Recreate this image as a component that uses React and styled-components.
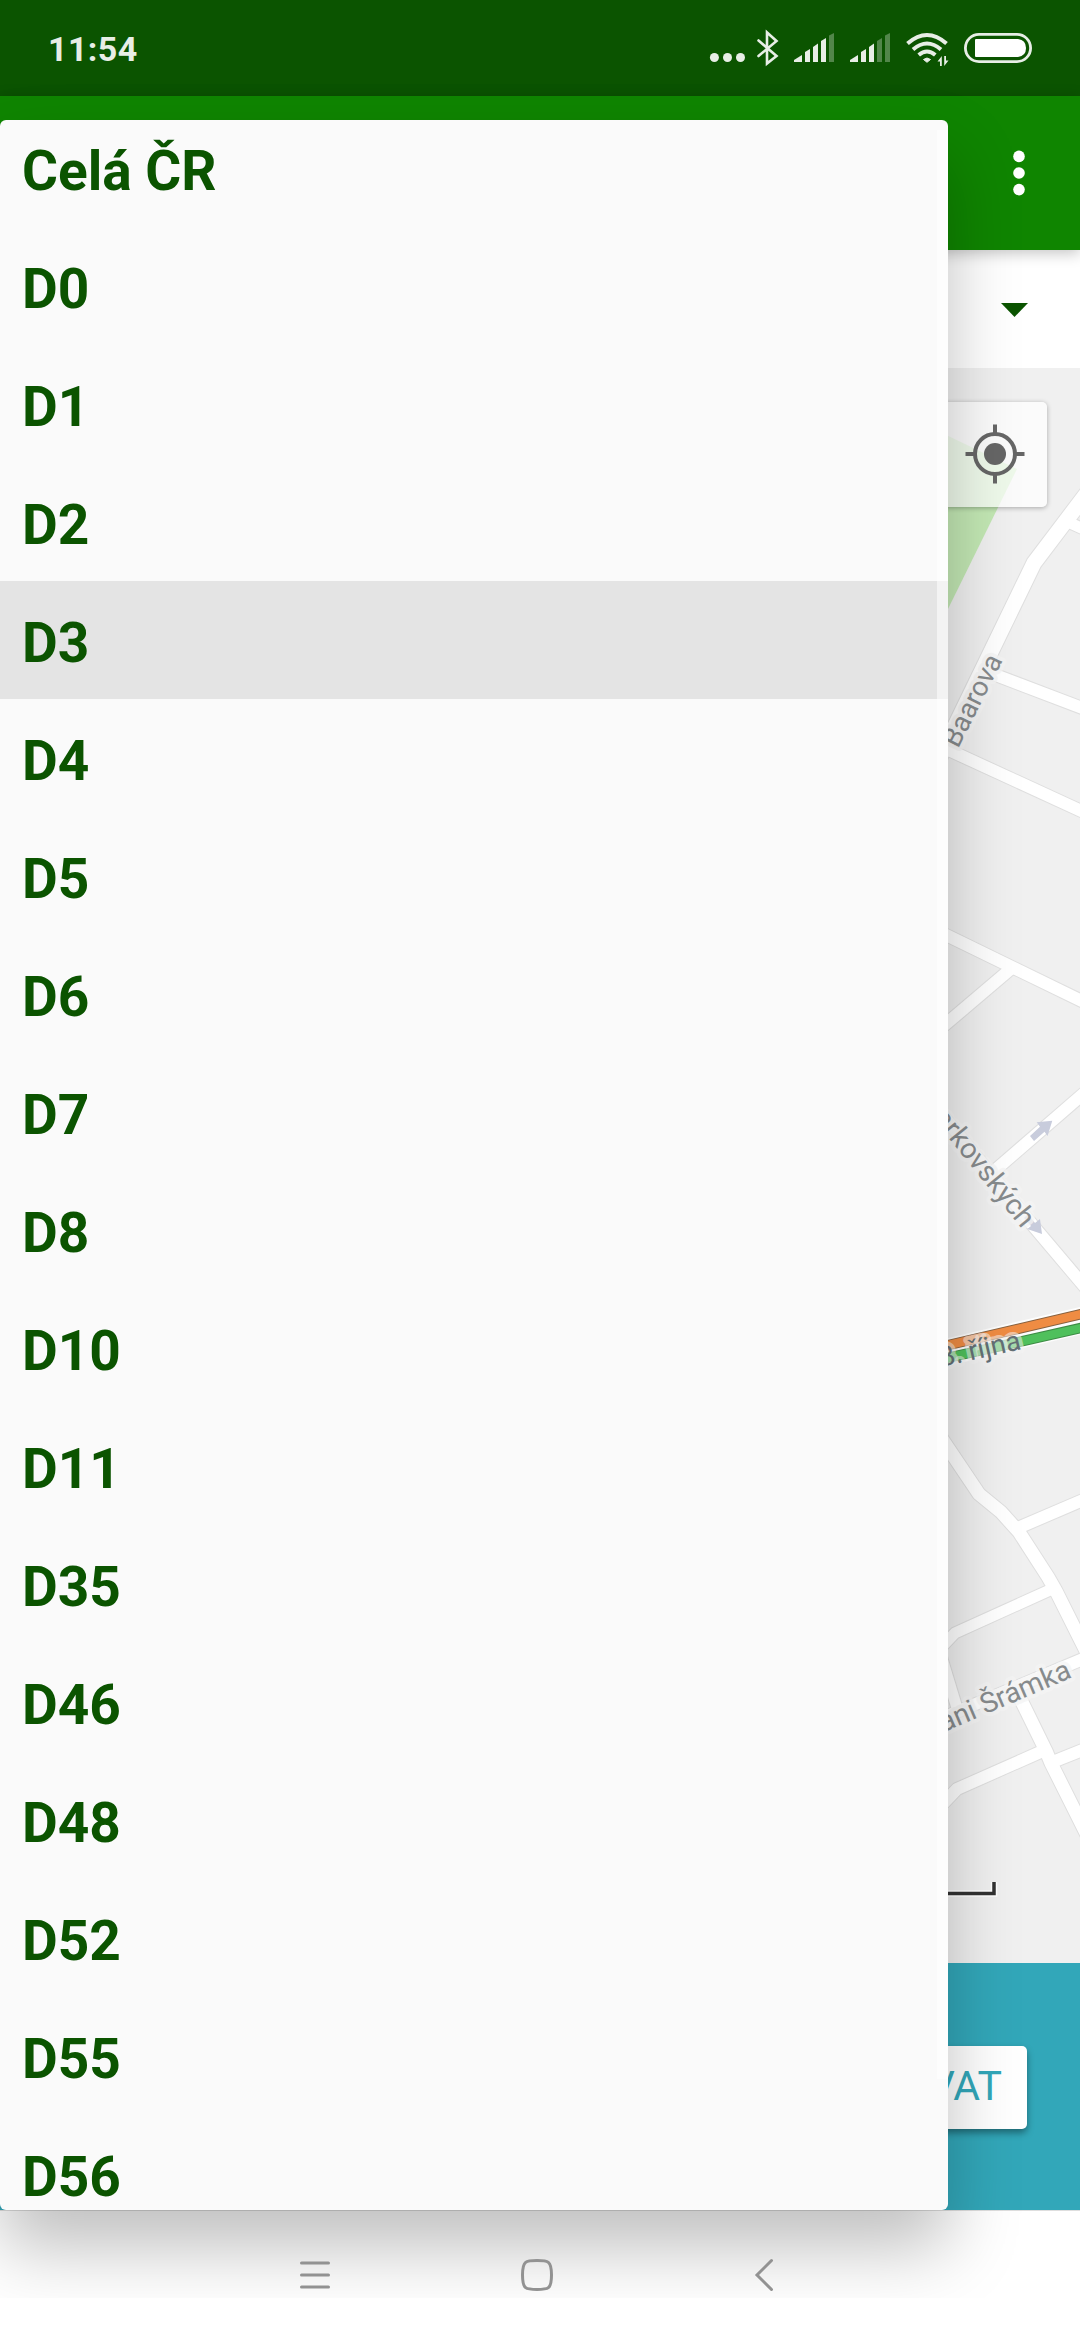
import React, { useState } from "react";
import styled, { createGlobalStyle } from "styled-components";

const GlobalStyle = createGlobalStyle`
  * {
    box-sizing: border-box;
  }

  body {
    margin: 0;
    background: #fff;
    font-family: Roboto, "Noto Sans", sans-serif;
  }
`;

const Screen = styled.div`
  position: relative;
  display: flex;
  flex-direction: column;
  width: 1080px;
  height: 2340px;
  overflow: hidden;
  background: #fff;
`;

const StatusBar = styled.header`
  display: flex;
  flex: none;
  align-items: center;
  justify-content: space-between;
  height: 96px;
  padding: 0 48px;
  background: #0b5400;
`;

const Clock = styled.span`
  color: #e8eee6;
  font-size: 34px;
  font-weight: 700;
  letter-spacing: 0.4px;
  line-height: 40px;
  padding-top: 2px;
`;

const StatusIcons = styled.div`
  display: flex;
  align-items: center;
  gap: 14px;
`;

const Icon = styled.svg`
  display: block;
  flex: none;
  overflow: visible;
`;

const AppBar = styled.div`
  display: flex;
  flex: none;
  position: relative;
  align-items: center;
  justify-content: flex-end;
  height: 154px;
  padding-right: 55px;
  background: #0f8500;
  box-shadow: 0 3px 14px rgba(0, 0, 0, 0.24);
`;

const SpinnerBar = styled.div`
  display: flex;
  flex: none;
  align-items: center;
  justify-content: flex-end;
  height: 118px;
  padding: 2px 52px 0 0;
  background: #fff;
`;

const MapArea = styled.main`
  display: grid;
  flex: none;
  height: 1595px;
  background: #f0f0f0;

  > * {
    grid-area: 1 / 1;
  }
`;

const Streets = styled.svg`
  display: block;
`;

const StreetName = styled.text`
  fill: ${(props) => props.$color || "#878b8d"};
  stroke: rgba(245, 245, 245, ${(props) => props.$halo || 0.75});
  stroke-width: 8px;
  stroke-linejoin: round;
  paint-order: stroke;
  font-family: Roboto, "Noto Sans", sans-serif;
  font-size: ${(props) => props.$size || 27.5}px;
`;

const LocateButton = styled.button`
  display: flex;
  align-items: center;
  justify-content: center;
  justify-self: end;
  width: 105px;
  height: 105px;
  margin: 34px 33px 0 0;
  padding: 0 0 1px;
  border: 0;
  border-radius: 5px;
  background: rgba(255, 255, 255, 0.72);
  box-shadow: 0 1px 5px rgba(0, 0, 0, 0.3);
`;

const BottomPanel = styled.div`
  display: flex;
  flex: none;
  align-items: flex-start;
  justify-content: flex-end;
  height: 247px;
  padding: 83px 53px 0 0;
  background: #32a7b9;
`;

const ActionButton = styled.button`
  width: 240px;
  height: 83px;
  padding: 0 25px 3px 0;
  border: 0;
  border-radius: 5px;
  background: #fff;
  box-shadow: 0 4px 7px rgba(0, 0, 0, 0.38);
  color: #32a7b9;
  font-family: inherit;
  font-size: 41px;
  line-height: 48px;
  text-align: right;
`;

const NavBar = styled.nav`
  display: flex;
  position: relative;
  z-index: 2;
  flex: none;
  align-items: center;
  gap: 188px;
  height: 130px;
  padding: 0 0 2px 298px;
  border-top: 1px solid rgba(0, 0, 0, 0.13);
`;

// the window that holds the dropdown, its shadow is cut off at the bottom edge
const PopupWindow = styled.div`
  position: absolute;
  z-index: 1;
  top: 0;
  left: 0;
  width: 1080px;
  height: 2298px;
  padding-top: 120px;
  overflow: hidden;
`;

const Dropdown = styled.div`
  position: relative;
  width: 948px;
  height: 2090px;
  border-radius: 6px;
  background: #fafafa;
  box-shadow: 0 38px 70px rgba(0, 0, 0, 0.25);
`;

const List = styled.ul`
  height: 100%;
  margin: 0;
  padding: 0;
  overflow: hidden;
  border-radius: 6px;
  list-style: none;
`;

const Item = styled.li`
  display: flex;
  align-items: center;
  height: 118px;
  padding: 6px 22px 0;
  background: ${(props) => (props.$active ? "#e4e4e4" : "transparent")};
  color: #0b5400;
  font-size: 55px;
  font-weight: 700;
  white-space: nowrap;

  &:first-child {
    margin-top: -11px;
  }
`;

const Scrollbar = styled.div`
  position: absolute;
  top: 10px;
  right: 0;
  width: 11px;
  height: 1949px;
  background: rgba(255, 255, 255, 0.55);
`;

const ROADS = [
  "Celá ČR",
  "D0",
  "D1",
  "D2",
  "D3",
  "D4",
  "D5",
  "D6",
  "D7",
  "D8",
  "D10",
  "D11",
  "D35",
  "D46",
  "D48",
  "D52",
  "D55",
  "D56",
];

// street center lines: [points, width]
const STREETS = [
  ["940,757 1034,563 1090,489", 15],
  ["1068,522 1090,532", 11],
  ["985,671 1090,711", 12],
  ["940,746 1090,815", 12],
  ["940,932 1090,1005", 12],
  ["940,1029 1013,967", 12],
  ["1090,1088 993,1172", 12],
  ["940,1112 1035,1228 1090,1293", 12],
  ["940,1436 979,1494 1001,1512 1019,1532 1048,1577 1056,1591 1090,1659", 13],
  ["1020,1527 1090,1497", 12],
  ["1050,1590 955,1633 936,1653", 11],
  ["940,1652 957,1708", 11],
  ["940,1719 1090,1656", 12],
  ["1021,1700 1046,1751 1051,1763 1090,1841", 13],
  ["1045,1750 957,1789 936,1811", 12],
  ["1050,1763 1090,1747", 12],
];

const Signal = ({ left, strength }) => {
  const bars = [
    `M${left} 62V60L${left + 8} 55V62Z`,
    `M${left + 11} 62V52L${left + 16} 49V62Z`,
    `M${left + 19} 62V47L${left + 24} 43.5V62Z`,
    `M${left + 27} 62V41L${left + 32} 38V62Z`,
    `M${left + 35} 62V35.5L${left + 40} 33V62Z`,
  ];
  return (
    <Icon width="42" height="36" viewBox={`${left} 30 42 36`} fill="#e8eee6">
      {bars.map((d, i) => (
        <path key={d} d={d} opacity={i < strength ? 1 : 0.32} />
      ))}
    </Icon>
  );
};

const StatusBarIcons = () => (
  <StatusIcons>
    <Icon width="33" height="36" viewBox="710 30 33 36" fill="#e8eee6">
      <circle cx="714.4" cy="57.5" r="4.5" />
      <circle cx="727.5" cy="57.5" r="4.5" />
      <circle cx="740.5" cy="57.5" r="4.5" />
    </Icon>
    <Icon width="23" height="36" viewBox="757 30 23 36" fill="none" stroke="#e8eee6" strokeWidth="2.6">
      <path d="M758.5 40.5L776.5 56L767 63.5V32.5L776.5 41L758.5 56" strokeLinecap="round" />
    </Icon>
    <Signal left={794} strength={4} />
    <Signal left={850} strength={3} />
    <Icon width="44" height="36" viewBox="906 30 44 36" fill="none" stroke="#e8eee6" strokeWidth="4">
      <path d="M907.5 43.5Q927 26.5 946.5 43.5" />
      <path d="M913 49.5Q927 37.5 941 49.5" />
      <path d="M918.7 55Q927 48 935.3 55" />
      <path d="M923.5 59.5Q927 56.5 930.5 59.5L927 62.3Z" fill="#e8eee6" strokeWidth="1" />
      <path d="M937.5 61.5L941.8 56V66H940V61.5ZM948.5 60.5L944.2 66V56H946V60.5Z" fill="#e8eee6" stroke="none" />
    </Icon>
    <Icon width="68" height="36" viewBox="964 30 68 36">
      <rect x="965.4" y="34.4" width="65.2" height="27.2" rx="13.6" fill="none" stroke="#e8eee6" strokeWidth="2.8" />
      <path d="M976 39H1018Q1026 40 1026 48Q1026 56 1018 57H976Q975 57 975 56V40Q975 39 976 39Z" fill="#fff" />
    </Icon>
  </StatusIcons>
);

const CityMap = () => (
  <Streets width="1080" height="1595" viewBox="0 368 1080 1595">
    <polygon points="940,432 1017,469 948,609 940,625" fill="#c3e8b4" />
    <g fill="none" stroke="#dfdfdf" strokeLinejoin="round">
      {STREETS.map(([points, width]) => (
        <polyline key={points} points={points} strokeWidth={width + 2} />
      ))}
    </g>
    <g fill="none" stroke="#fff" strokeLinejoin="round">
      {STREETS.map(([points, width]) => (
        <polyline key={points} points={points} strokeWidth={width} />
      ))}
    </g>

    {/* one-way arrows */}
    <g fill="#c8ccdc">
      <path d="M1030 1136L1034 1141L1044.5 1131.7L1047.5 1136L1052.3 1120.7L1036.7 1122.3L1040 1126.7Z" />
      <path d="M1024 1218L1028 1214L1035 1223L1040 1219L1042 1234L1027.3 1229L1031 1226Z" />
    </g>

    {/* main road with traffic in both directions */}
    <g fill="none">
      <path d="M940 1353.8L1090 1318.5" stroke="#fdfdfd" strokeWidth="27" />
      <path d="M940 1347L1090 1312" stroke="#85603f" strokeWidth="10.5" />
      <path d="M940 1347L1090 1312" stroke="#ef8c43" strokeWidth="8.5" />
      <path d="M940 1359.5L1090 1326" stroke="#3d8a45" strokeWidth="10.5" />
      <path d="M940 1359.5L1090 1326" stroke="#4fc05c" strokeWidth="8.5" />
    </g>

    <StreetName transform="translate(958 749) rotate(-63.2)">Baarova</StreetName>
    <StreetName transform="translate(1022 1229) rotate(51)" textAnchor="end" $size={28.5}>
      arkovských
    </StreetName>
    <StreetName transform="translate(1022 1349) rotate(-12.5)" textAnchor="end" $color="#647076" $halo={0.55}>
      28. října
    </StreetName>
    <StreetName transform="translate(1073 1677) rotate(-23.1)" textAnchor="end" $size={28.3}>
      ani Šrámka
    </StreetName>

    <path d="M900 1893.5H994V1882" fill="none" stroke="#fff" strokeWidth="6.5" />
    <path d="M900 1893.5H994V1882" fill="none" stroke="#333" strokeWidth="3.5" />
  </Streets>
);

const App = () => {
  const [selected, setSelected] = useState("D3");

  return (
    <>
      <GlobalStyle />
      <Screen>
        <StatusBar>
          <Clock>11:54</Clock>
          <StatusBarIcons />
        </StatusBar>
        <AppBar>
          <Icon width="12" height="46" viewBox="0 0 12 46" fill="#fff">
            <circle cx="6" cy="6.4" r="5.8" />
            <circle cx="6" cy="23" r="5.8" />
            <circle cx="6" cy="39.6" r="5.8" />
          </Icon>
        </AppBar>
        <SpinnerBar>
          <Icon width="27" height="14" viewBox="0 0 27 14" fill="#0b5400">
            <path d="M0 0H27L13.5 14Z" />
          </Icon>
        </SpinnerBar>
        <MapArea>
          <CityMap />
          <LocateButton aria-label="Moje poloha">
            <Icon width="60" height="60" viewBox="0 0 60 60" fill="none" stroke="#666" strokeWidth="4">
              <circle cx="30" cy="30" r="20" />
              <circle cx="30" cy="30" r="11" fill="#666" stroke="none" />
              <path d="M30 0.5V10M30 50V59.5M0.5 30H10M50 30H59.5" />
            </Icon>
          </LocateButton>
        </MapArea>
        <BottomPanel>
          <ActionButton>VAT</ActionButton>
        </BottomPanel>
        <NavBar>
          <Icon width="34" height="34" viewBox="0 0 34 34" fill="none" stroke="#929292" strokeWidth="3" strokeLinecap="round">
            <path d="M3.5 5H30.5M3.5 17H30.5M3.5 29H30.5" />
          </Icon>
          <Icon width="34" height="34" viewBox="0 0 34 34" fill="none" stroke="#929292" strokeWidth="3">
            <path d="M17 2.5C28 2.5 31.5 2.5 31.5 17S28 31.5 17 31.5S2.5 31.5 2.5 17S6 2.5 17 2.5Z" />
          </Icon>
          <Icon width="34" height="34" viewBox="0 0 34 34" fill="none" stroke="#929292" strokeWidth="3" strokeLinecap="round">
            <path d="M29.5 2.5L15 17L29.5 31.5" />
          </Icon>
        </NavBar>

        <PopupWindow>
          <Dropdown>
            <List>
              {ROADS.map((road) => (
                <Item key={road} $active={road === selected} onClick={() => setSelected(road)}>
                  {road}
                </Item>
              ))}
            </List>
            <Scrollbar />
          </Dropdown>
        </PopupWindow>
      </Screen>
    </>
  );
};

export default App;
